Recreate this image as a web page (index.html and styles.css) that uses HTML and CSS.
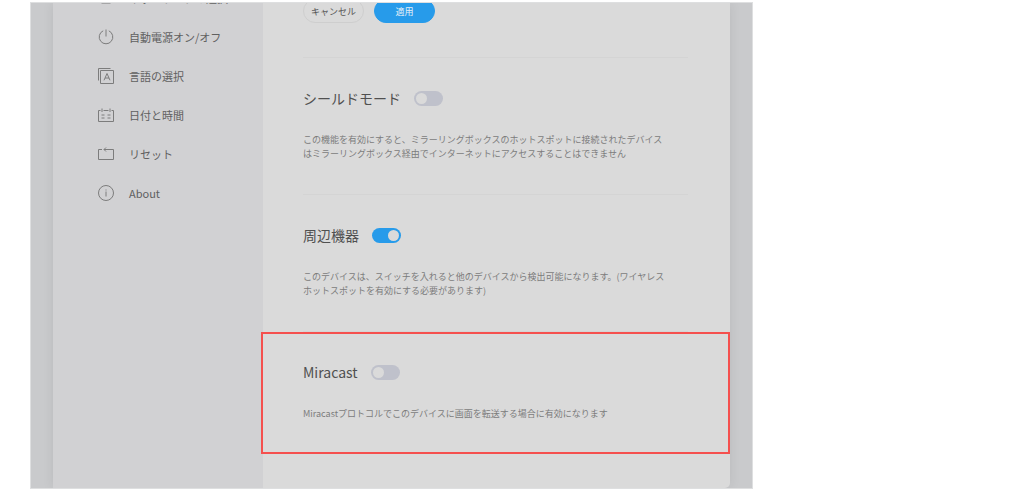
FILE: index.html
```html
<!DOCTYPE html>
<html lang="ja">

<head>
    <meta charset="UTF-8" />
    <meta name="viewport" content="width=device-width, initial-scale=1.0" />
    <title>設定</title>
    <link rel="stylesheet" href="styles.css">
</head>

<body>
    <div class="screen">
        <div class="card">
            <nav class="sidebar">
                <a class="nav-item" href="#">
                    <svg class="icon" viewBox="0 0 16 16"><path d="M3.5 1.5h9v11.5h-9z" /></svg>
                    ネットワークの選択
                </a>
                <a class="nav-item" href="#">
                    <svg class="icon" viewBox="0 0 16 16"><path d="M8 .5v7M5.2 1.8a6.8 6.8 0 1 0 5.6 0" /></svg>
                    自動電源オン/オフ
                </a>
                <a class="nav-item" href="#">
                    <svg class="icon" viewBox="0 0 16 16"><path d="M.5 12.5V.5h12M2.5 2.5h13v13h-13zM6 12.3L9 5.5l3 6.8M7 10h4" /></svg>
                    言語の選択
                </a>
                <a class="nav-item" href="#">
                    <svg class="icon" viewBox="0 0 16 16"><path d="M2.5 3.5h-2v11h15v-11h-2M5.5 3.5h5M4 1.5V5M12 1.5V5M3.5 8h3M9.5 8h3M3.5 11h3M9.5 11h3" /></svg>
                    日付と時間
                </a>
                <a class="nav-item" href="#">
                    <svg class="icon" viewBox="0 0 16 16"><path d="M4 3.5H.5v10h15v-10H6M8 1.5l-2 2 2 2" /></svg>
                    リセット
                </a>
                <a class="nav-item" href="#">
                    <svg class="icon" viewBox="0 0 16 16"><circle cx="8" cy="8" r="7.5" /><path d="M8 4.5v1M8 6.5v5" /></svg>
                    About
                </a>
            </nav>

            <main class="content">
                <div class="actions">
                    <button class="btn" type="button">キャンセル</button>
                    <button class="btn btn-primary" type="button">適用</button>
                </div>

                <section class="setting">
                    <div class="setting-head">
                        <label class="setting-title" for="shield">シールドモード</label>
                        <input class="switch" type="checkbox" id="shield">
                    </div>
                    <p class="setting-text">この機能を有効にすると、ミラーリングボックスのホットスポットに接続されたデバイス<br>はミラーリングボックス経由でインターネットにアクセスすることはできません</p>
                </section>

                <section class="setting">
                    <div class="setting-head">
                        <label class="setting-title" for="nearby">周辺機器</label>
                        <input class="switch" type="checkbox" id="nearby" checked>
                    </div>
                    <p class="setting-text">このデバイスは、スイッチを入れると他のデバイスから検出可能になります。(ワイヤレス<br>ホットスポットを有効にする必要があります)</p>
                </section>

                <section class="setting highlighted">
                    <div class="setting-head">
                        <label class="setting-title" for="miracast">Miracast</label>
                        <input class="switch" type="checkbox" id="miracast">
                    </div>
                    <p class="setting-text">Miracastプロトコルでこのデバイスに画面を転送する場合に有効になります</p>
                </section>
            </main>
        </div>
    </div>
</body>

</html>
```
FILE: styles.css
```css
* {
    box-sizing: border-box;
}

body {
    margin: 0;
    background-color: #fff;
    color: #555;
    font-family: "Noto Sans CJK JP", "Noto Sans", sans-serif;
}

.screen {
    max-width: 723px;
    margin: 2px 30px 0;
    padding: 0 22px;
    border: 1px solid #dedfe0;
    background-color: #c9cacc;
    overflow: hidden;
}

.card {
    display: flex;
    background-color: #dadada;
    border-radius: 0 0 5px 0;
    box-shadow: 0 0 12px rgba(0, 0, 0, 0.08);
}

.sidebar {
    flex: 0 0 210px;
    display: flex;
    flex-direction: column;
    gap: 15px;
    margin-top: -17px;
    padding-left: 45px;
    background-color: #d1d1d3;
}

.nav-item {
    display: flex;
    align-items: center;
    gap: 15px;
    height: 24px;
    color: #606060;
    font-size: 11px;
    text-decoration: none;
    white-space: nowrap;
}

.icon {
    width: 16px;
    height: 16px;
    fill: none;
    stroke: #7c7c7c;
    stroke-width: 1;
}

.content {
    flex: 1;
    padding: 0 42px 20px 40px;
}

.actions {
    display: flex;
    gap: 10px;
    margin-top: -4px;
    padding-bottom: 34px;
}

.btn {
    width: 61px;
    height: 24px;
    padding: 0;
    border: 1px solid #cecece;
    border-radius: 12px;
    background-color: #dadada;
    color: #555;
    font-family: inherit;
    font-size: 9px;
    cursor: pointer;
}

.btn-primary {
    border-color: #279bea;
    background-color: #279bea;
    color: #e4eff7;
}

.setting {
    position: relative;
    height: 137px;
    padding-top: 29px;
    border-top: 1px solid #d4d4d4;
}

.setting-head {
    display: flex;
    align-items: center;
    gap: 13px;
    height: 22px;
}

.setting-title {
    font-size: 14px;
    color: #505050;
}

.switch {
    appearance: none;
    width: 29px;
    height: 15px;
    margin: 0;
    padding: 2px;
    border-radius: 8px;
    background-color: #bfc1cb;
    cursor: pointer;
}

.switch::before {
    content: "";
    display: block;
    width: 11px;
    height: 11px;
    border-radius: 50%;
    background-color: #dadada;
}

.switch:checked {
    background-color: #279bea;
}

.switch:checked::before {
    margin-left: auto;
}

.setting-text {
    margin: 24px 0 0;
    color: #7c7c7c;
    font-size: 9px;
    line-height: 14px;
    white-space: nowrap;
}

/* red frame around the setting */
.highlighted::after {
    content: "";
    position: absolute;
    top: 0;
    bottom: 14px;
    left: -42px;
    right: -42px;
    border: 2px solid #f5504e;
    pointer-events: none;
}
```
